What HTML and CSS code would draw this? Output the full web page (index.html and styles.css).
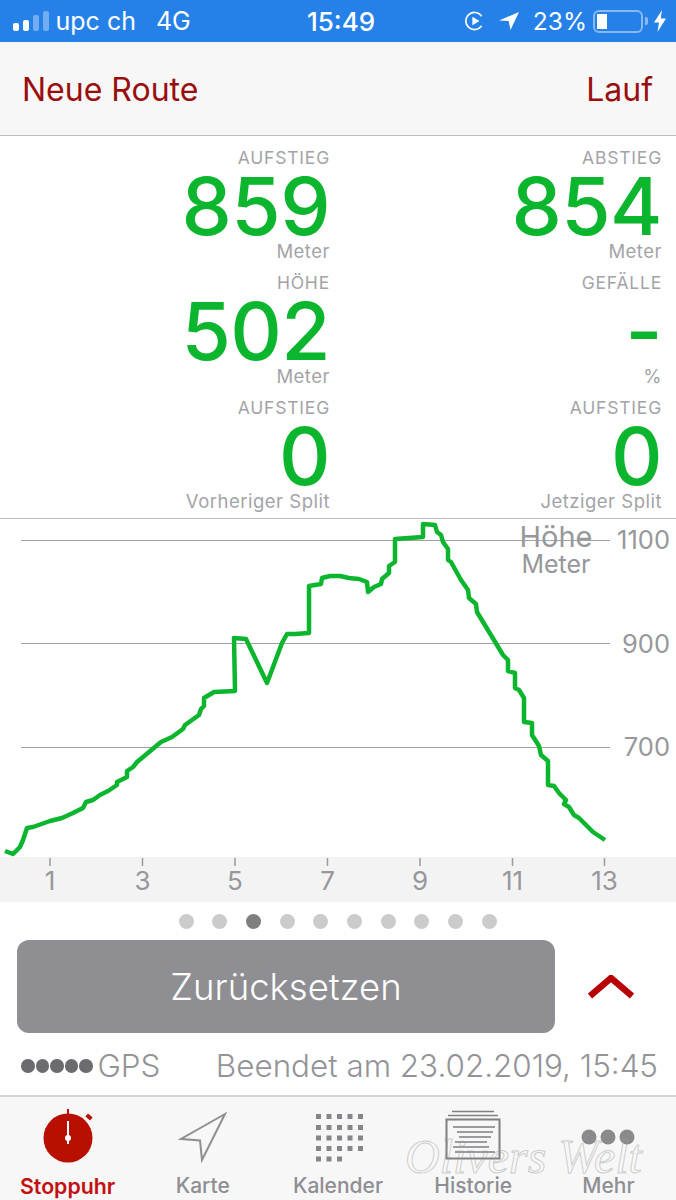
FILE: index.html
```html
<!DOCTYPE html>
<html lang="de">
<head>
<meta charset="utf-8">
<title>Neue Route</title>
<link rel="stylesheet" href="styles.css">
</head>
<body>
<div class="screen">
  <header class="status">
    <div class="status-left">
      <span class="signal"><i class="b1"></i><i class="b2"></i><i class="b3 dim"></i><i class="b4 dim"></i></span>
      <span class="carrier">upc ch</span>
      <span class="net">4G</span>
    </div>
    <div class="status-time">15:49</div>
    <div class="status-right">
      <svg class="ic-lock" viewBox="0 0 20 20" width="20" height="20"><path d="M16.6 5.2A8.6 8.6 0 1 0 16.6 14.8" fill="none" stroke="#fff" stroke-width="1.6"/><path d="M7.4 5.8L14.4 10L7.4 14.2Z" fill="#fff"/></svg>
      <svg class="ic-arrow" viewBox="0 0 20 18" width="20" height="18"><path d="M20 0L0 8.5L9.6 9L11.5 18Z" fill="#fff"/></svg>
      <span class="pct">23%</span>
      <span class="battery"><span class="battery-fill"></span></span>
      <span class="battery-nub"></span>
      <svg class="ic-bolt" viewBox="0 0 12 22" width="12" height="22"><path d="M8 0L0 12.5H5L3.5 22L12 8.5H6.8Z" fill="#fff"/></svg>
    </div>
  </header>

  <nav class="navbar">
    <span>Neue Route</span>
    <span>Lauf</span>
  </nav>

  <section class="stats">
    <div class="stat"><div class="stat-label">AUFSTIEG</div><div class="stat-value">859</div><div class="stat-unit">Meter</div></div>
    <div class="stat"><div class="stat-label">ABSTIEG</div><div class="stat-value">854</div><div class="stat-unit">Meter</div></div>
    <div class="stat"><div class="stat-label">HÖHE</div><div class="stat-value">502</div><div class="stat-unit">Meter</div></div>
    <div class="stat"><div class="stat-label">GEFÄLLE</div><div class="stat-value">-</div><div class="stat-unit">%</div></div>
    <div class="stat"><div class="stat-label">AUFSTIEG</div><div class="stat-value">0</div><div class="stat-unit">Vorheriger Split</div></div>
    <div class="stat"><div class="stat-label">AUFSTIEG</div><div class="stat-value">0</div><div class="stat-unit">Jetziger Split</div></div>
  </section>

  <svg class="chart" viewBox="0 519 676 383" width="676" height="383">
    <rect class="band" x="0" y="857" width="676" height="45"/>
    <path class="grid" d="M21 540.5H610M21 643.5H610M21 747.5H610"/>
    <text class="t-title" x="556" y="547">Höhe</text>
    <text class="t-sub" x="556" y="573">Meter</text>
    <text class="t-y" x="670" y="549">1100</text>
    <text class="t-y" x="670" y="653">900</text>
    <text class="t-y" x="670" y="756">700</text>
    <path class="tick" d="M50 858V866M142.500 858V866M235 858V866M327.500 858V866M420 858V866M512.500 858V866M604.500 858V866"/>
    <text class="t-x" x="50" y="890">1</text>
    <text class="t-x" x="142.500" y="890">3</text>
    <text class="t-x" x="235" y="890">5</text>
    <text class="t-x" x="327.500" y="890">7</text>
    <text class="t-x" x="420" y="890">9</text>
    <text class="t-x" x="512.500" y="890">11</text>
    <text class="t-x" x="604.500" y="890">13</text>
    <polyline class="line" points="5,851 13,854 20,847 23,840 27,828 33,827 50,821 62,818 73,813 83,808 86,802 93,800 100,795 108,791 117,785 117,782 127,777 127,771 133,767 137,762 161,742 172,737 183,729 185,725 199,715 201,709 204,706 204,698 214,692 235,691 234,638 246,639 267,683 282,643 287,634 295,634 309,633 309,586 321,584 322,578 330,576 340,576 349,578 359,579 367,582 368,592 374,587 381,584 382,579 389,573 389,566 395,562 395,539 423,537 423,524 435,525 437,532 441,535 443,542 448,549 448,560 451,562 461,580 468,590 469,598 476,604 477,612 503,655 508,660 508,671 515,673 515,688 519,690 524,698 524,722 532,723 532,735 539,746 541,755 548,761 548,785 554,786 559,793 566,800 564,804 569,807 574,815 579,818 583,822 593,832 605,840"/>
  </svg>

  <div class="pager">
    <i></i><i></i><i class="on"></i><i></i><i></i><i></i><i></i><i></i><i></i><i></i>
  </div>

  <div class="action">
    <button class="reset">Zurücksetzen</button>
    <svg class="chevron" viewBox="0 0 46 24" width="46" height="24"><path d="M2 21L23 3L44 21" fill="none" stroke="#b80000" stroke-width="6.500"/></svg>
  </div>

  <div class="info">
    <span class="gps"><span class="gps-dots"><i></i><i></i><i></i><i></i><i></i></span>GPS</span>
    <span>Beendet am 23.02.2019, 15:45</span>
  </div>

  <footer class="tabs">
    <div class="tab active">
      <svg viewBox="0 0 56 56" width="56" height="56">
        <rect x="27" y="1" width="2" height="6" fill="#b90f00"/>
        <rect x="46" y="7" width="6" height="4" transform="rotate(40 49 9)" fill="#b90f00"/>
        <circle cx="28" cy="30" r="24.500" fill="#b90f00"/>
        <rect x="27" y="13" width="2" height="23" fill="#fff"/>
        <circle cx="28" cy="30" r="3" fill="#fff"/>
      </svg>
      <span>Stoppuhr</span>
    </div>
    <div class="tab">
      <svg viewBox="0 0 56 56" width="56" height="56"><path d="M50 6L6 31L25 32.500L27 52Z" fill="none" stroke="#8e8e93" stroke-width="2"/></svg>
      <span>Karte</span>
    </div>
    <div class="tab">
      <svg viewBox="0 0 56 56" width="56" height="56">
        <path class="cal" d="M6 6h5v5h-5zM16.500 6h5v5h-5zM27 6h5v5h-5zM37.500 6h5v5h-5zM48 6h5v5h-5zM6 17h5v5h-5zM16.500 17h5v5h-5zM27 17h5v5h-5zM37.500 17h5v5h-5zM48 17h5v5h-5zM6 27.500h5v5h-5zM16.500 27.500h5v5h-5zM27 27.500h5v5h-5zM37.500 27.500h5v5h-5zM48 27.500h5v5h-5zM6 38h5v5h-5zM16.500 38h5v5h-5zM27 38h5v5h-5zM37.500 38h5v5h-5zM48 38h5v5h-5zM6 48.500h5v5h-5zM16.500 48.500h5v5h-5zM27 48.500h5v5h-5z"/>
      </svg>
      <span>Kalender</span>
    </div>
    <div class="tab">
      <svg viewBox="0 0 56 56" width="56" height="56">
        <path d="M7 3.500H49M3 7.500H53" fill="none" stroke="#7f7f84" stroke-width="1.500"/>
        <rect x="1.500" y="11.500" width="53" height="39" fill="none" stroke="#7f7f84" stroke-width="2"/>
        <path d="M8 19H50M12 24H48M14 29H46M10 34H42M8 39H44M10 44H50" fill="none" stroke="#7f7f84" stroke-width="1.500"/>
      </svg>
      <span>Historie</span>
    </div>
    <div class="tab">
      <svg viewBox="0 0 56 56" width="56" height="56"><circle cx="9" cy="29" r="7.500" fill="#8a8a8e"/><circle cx="28" cy="29" r="7.500" fill="#8a8a8e"/><circle cx="47" cy="29" r="7.500" fill="#8a8a8e"/></svg>
      <span>Mehr</span>
    </div>
    <div class="watermark">Olivers Welt</div>
  </footer>
</div>
</body>
</html>
```
FILE: styles.css
```css
* { box-sizing: border-box; }
html, body { margin: 0; padding: 0; background: #fff; }
body { font-family: Inter, "Liberation Sans", sans-serif; }
.screen { width: 676px; height: 1200px; overflow: hidden; display: flex; flex-direction: column; }

.status { height: 42px; background: #2581e8; color: #fff; display: grid; grid-template-columns: 1fr auto 1fr; align-items: center; font-size: 25px; padding: 0 10px 0 13px; }
.status-left { display: flex; align-items: center; }
.signal { display: flex; align-items: flex-end; gap: 4.500px; height: 20px; margin-right: 7px; }
.signal i { display: block; width: 5.500px; background: #fff; border-radius: 2px; }
.signal .dim { background: rgba(255,255,255,.35); }
.b1 { height: 8px; } .b2 { height: 11px; } .b3 { height: 16px; } .b4 { height: 20px; }
.net { margin-left: 20px; }
.status-time { font-weight: 500; font-size: 26px; margin-left: 3px; }
.status-right { display: flex; align-items: center; justify-content: flex-end; }
.ic-arrow { margin-left: 14px; }
.pct { margin-left: 14px; font-size: 24.500px; }
.battery { width: 50px; height: 23px; margin-left: 6px; border: 2px solid rgba(255,255,255,.45); border-radius: 6px; padding: 2px; display: block; }
.battery-fill { display: block; width: 10px; height: 15px; background: #fff; }
.battery-nub { width: 3px; height: 8px; margin-left: 2px; background: rgba(255,255,255,.45); border-radius: 0 2px 2px 0; }
.ic-bolt { margin-left: 6px; }

.navbar { height: 94px; background: #f7f7f7; border-bottom: 1px solid #bdbdbd; display: flex; justify-content: space-between; align-items: center; padding: 2px 23px 0 22px; color: #9a0d0d; font-size: 32px; }

.stats { height: 383px; padding: 12px 14px 0 0; display: grid; grid-template-columns: 330px 332px; grid-auto-rows: 114px; row-gap: 11px; border-bottom: 1px solid #bdbdbd; }
.stat { text-align: right; }
.stat-label { font-size: 17.500px; line-height: 20px; color: #a3a3a7; letter-spacing: .8px; }
.stat-unit { font-size: 18.500px; line-height: 20px; color: #a3a3a7; letter-spacing: .5px; }
.stat-value { font-size: 80px; line-height: 78px; margin: -1px 0 -4px; color: #0bb52d; font-weight: 500; letter-spacing: -.6px; }

.chart { display: block; }
.band { fill: #f3f3f3; }
.grid { stroke: #a2a2a2; stroke-width: 1; fill: none; }
.tick { stroke: #9a9aa0; stroke-width: 1.500; fill: none; }
.line { fill: none; stroke: #0bb52d; stroke-width: 4.500; stroke-linejoin: round; }
.chart text { font-family: Inter, "Liberation Sans", sans-serif; fill: #97979c; }
.t-title { font-size: 29px; text-anchor: middle; }
.t-sub { font-size: 25px; text-anchor: middle; }
.t-y { font-size: 25.500px; text-anchor: end; }
.t-x { font-size: 26px; text-anchor: middle; }

.pager { height: 38px; display: flex; justify-content: flex-start; align-items: center; gap: 18.700px; padding-left: 178.500px; }
.pager i { display: block; width: 15px; height: 15px; border-radius: 50%; background: #cbcbcb; }
.pager .on { background: #7f7f7f; }

.action { height: 93px; display: flex; align-items: center; padding-left: 17px; }
.reset { width: 538px; height: 93px; border: 0; border-radius: 12px; background: #8e8e93; color: #fff; font: 300 36.500px Inter, "Liberation Sans", sans-serif; }
.chevron { margin-left: 33px; }

.info { height: 62px; display: flex; align-items: center; justify-content: space-between; padding: 4px 18px 0 21px; color: #939398; font-size: 31.400px; font-weight: 300; }
.gps { display: flex; align-items: center; }
.gps-dots { display: flex; gap: 1px; margin-right: 5px; }
.gps-dots i { display: block; width: 13.500px; height: 13.500px; border-radius: 50%; background: #6c6c70; }

.tabs { position: relative; flex: 1; background: #f7f7f7; border-top: 2px solid #d4d4d4; display: grid; grid-template-columns: repeat(5, 1fr); }
.tab { display: flex; flex-direction: column; align-items: center; padding-top: 11px; color: #8e8e93; font-size: 21px; font-weight: 500; }
.tab span { line-height: 24px; margin-top: 10px; }
.tab svg { display: block; }
.tab.active { color: #c40f0f; font-weight: 600; font-size: 21.300px; }
.cal { fill: #85858a; }
.watermark { position: absolute; left: 405px; top: 32px; white-space: nowrap; font: italic 400 48px "Liberation Serif", serif; color: transparent; -webkit-text-stroke: 1px rgba(150,150,150,.45); }
```
